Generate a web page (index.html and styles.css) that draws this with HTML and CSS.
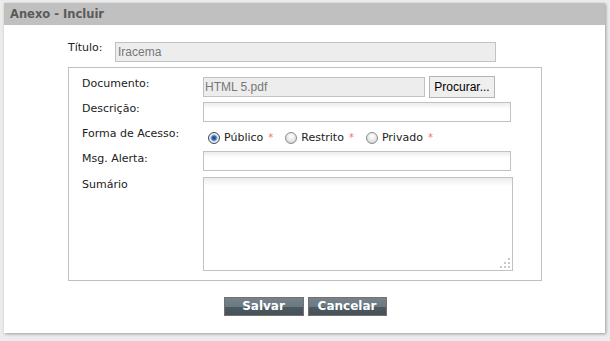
FILE: index.html
```html
<!DOCTYPE html>
<html lang="pt-BR">
  <head>
    <meta charset="UTF-8" />
    <title>Anexo - Incluir</title>
    <link rel="stylesheet" href="styles.css">
  </head>
  <body>
    <div class="panel">
      <div class="panel-header">Anexo - Incluir</div>
      <div class="panel-body">
        <div class="title-row">
          <label class="title-label" for="titulo">Título:</label>
          <input type="text" id="titulo" class="field readonly title-field" value="Iracema" readonly />
        </div>

        <div class="box">
          <div class="row row-doc">
            <label for="documento">Documento:</label>
            <input type="text" id="documento" class="field readonly doc-field" value="HTML 5.pdf" readonly />
            <button class="browse">Procurar...</button>
          </div>
          <div class="row row-desc">
            <label for="descricao">Descrição:</label>
            <input type="text" id="descricao" class="field wide-field" />
          </div>
          <div class="row row-radio">
            <label>Forma de Acesso:</label>
            <div class="radios">
              <label class="option"><input type="radio" name="acesso" checked /> Público <span class="req">*</span></label>
              <label class="option"><input type="radio" name="acesso" /> Restrito <span class="req">*</span></label>
              <label class="option"><input type="radio" name="acesso" /> Privado <span class="req">*</span></label>
            </div>
          </div>
          <div class="row row-msg">
            <label for="alerta">Msg. Alerta:</label>
            <input type="text" id="alerta" class="field wide-field" />
          </div>
          <div class="row row-summary">
            <label for="sumario">Sumário</label>
            <div class="summary-wrap">
              <textarea id="sumario" class="field summary"></textarea>
              <svg class="grip" width="12" height="12" viewBox="0 0 12 12">
                <rect x="9" y="1" width="2" height="2" />
                <rect x="5" y="5" width="2" height="2" />
                <rect x="9" y="5" width="2" height="2" />
                <rect x="1" y="9" width="2" height="2" />
                <rect x="5" y="9" width="2" height="2" />
                <rect x="9" y="9" width="2" height="2" />
              </svg>
            </div>
          </div>
        </div>

        <div class="actions">
          <button class="action salvar">Salvar</button>
          <button class="action cancelar">Cancelar</button>
        </div>
      </div>
    </div>
  </body>
</html>
```

FILE: styles.css
```css
/* Base */
body {
  margin: 0;
  padding: 3px 5px 8px 4px;
  background-color: #ececec;
  font-family: "DejaVu Sans", Verdana, sans-serif;
  font-size: 11px;
  color: #222;
}

/* Painel */
.panel {
  width: 601px;
  height: 330px;
  background-color: #fff;
  box-shadow: 1px 1px 3px rgba(0, 0, 0, 0.35);
}

.panel-header {
  height: 22px;
  line-height: 22px;
  padding-left: 6px;
  background-color: #c0c0c0;
  color: #5a5a5a;
  font-weight: bold;
  font-size: 11.5px;
}

.panel-body {
  padding: 17px 0 0 64px;
}

/* Campos */
.field {
  box-sizing: border-box;
  height: 20px;
  margin: 0;
  padding: 0 2px;
  border: 1px solid #c2c2c2;
  font-family: "Liberation Sans", Arial, sans-serif;
  font-size: 12px;
  color: #333;
  background: linear-gradient(#ececec, #fff 6px);
  outline: none;
}

.readonly {
  background: #ededed;
  color: #777;
}

.title-row {
  display: flex;
  align-items: flex-start;
}

.title-label {
  width: 47px;
  margin-top: -1px;
  line-height: 13px;
}

.title-field {
  width: 381px;
}

/* Caixa do documento */
.box {
  box-sizing: border-box;
  width: 474px;
  margin-top: 5px;
  padding: 8px 0 9px 13px;
  border: 1px solid #c0c0c0;
}

.row {
  display: flex;
  align-items: flex-start;
  margin-bottom: 5px;
}

.row > label {
  width: 121px;
  flex-shrink: 0;
  padding-top: 1px;
  line-height: 13px;
}

.row-doc {
  height: 22px;
  align-items: center;
  margin-bottom: 4px;
}

.row-doc > label {
  align-self: flex-start;
}

.row-desc > label {
  padding-top: 0;
}

.doc-field {
  width: 222px;
  padding-left: 1px;
}

.browse {
  box-sizing: border-box;
  width: 66px;
  height: 22px;
  margin-left: 4px;
  padding: 0;
  border: 1px solid #b4b4b4;
  background-color: #efefef;
  font-family: "Liberation Sans", Arial, sans-serif;
  font-size: 12px;
  color: #000;
}

.wide-field {
  width: 308px;
}

.row-radio {
  height: 20px;
  margin-bottom: 4px;
}

.row-radio > label {
  padding-top: 0;
}

.radios {
  display: flex;
  padding-top: 4px;
  padding-left: 5px;
}

.option {
  display: flex;
  align-items: center;
  margin-right: 12px;
  line-height: 13px;
}

.option input {
  appearance: none;
  box-sizing: border-box;
  width: 12px;
  height: 12px;
  margin: 0 4px 0 0;
  border: 1px solid #8c8c8c;
  border-radius: 50%;
  background: radial-gradient(circle at 50% 35%, #fff 0, #e8e8e8 50%, #c4c4c4 100%);
}

.option input:checked {
  border-color: #4a4a4a;
  background: radial-gradient(circle, #123f80 0, #2f6dbb 2px, #8fb4e0 3px, #eef2f6 4px, #c8c8c8 100%);
}

.req {
  margin-left: 5px;
  color: #f07070;
  font-size: 10px;
}

.row-msg {
  margin-bottom: 6px;
}

.row-summary {
  margin-bottom: 0;
}

.summary-wrap {
  position: relative;
  height: 94px;
}

.summary {
  width: 310px;
  height: 94px;
  resize: none;
  display: block;
  background: linear-gradient(#ececec, #fff 8px);
}

.grip {
  position: absolute;
  right: 2px;
  bottom: 2px;
  fill: #c8c8c8;
}

/* Botões */
.actions {
  display: flex;
  justify-content: center;
  gap: 4px;
  width: 474px;
  margin-top: 16px;
}

.action {
  box-sizing: border-box;
  height: 19px;
  padding: 0;
  border: 1px solid #7d6e6e;
  background: linear-gradient(#74848a 0, #6a7a80 50%, #4b5960 55%, #45525a 100%);
  color: #fff;
  font-family: "DejaVu Sans", Verdana, sans-serif;
  font-weight: bold;
  font-size: 12px;
  line-height: 17px;
}

.salvar {
  width: 80px;
}

.cancelar {
  width: 79px;
}
```
